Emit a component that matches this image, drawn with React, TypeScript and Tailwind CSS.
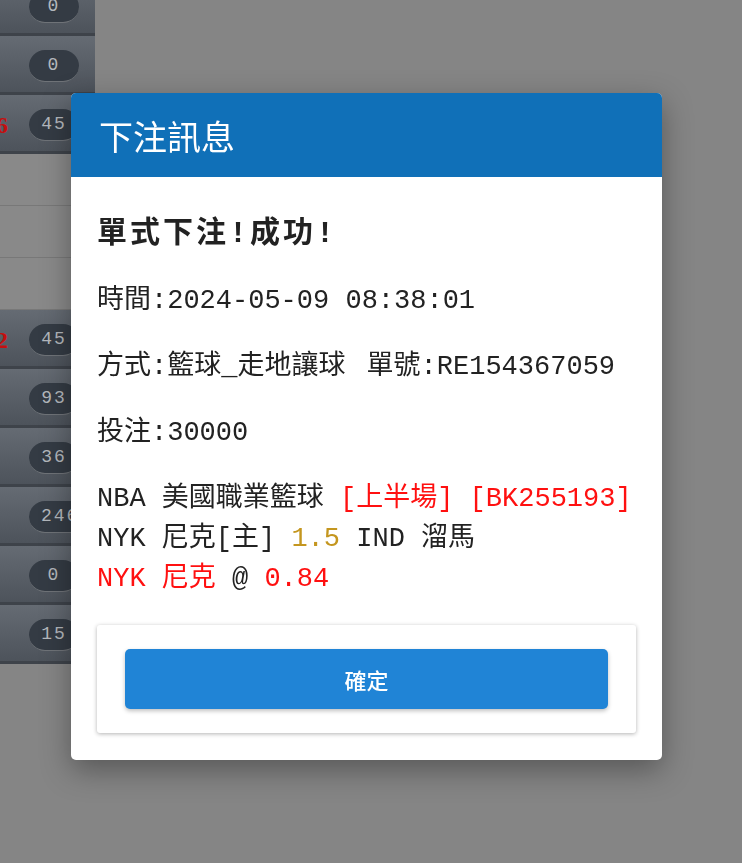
type Row = {
  kind: "dark" | "light";
  count?: string;
  mark?: string;
};

const rows: Row[] = [
  { kind: "dark", count: "0" },
  { kind: "dark", count: "0" },
  { kind: "dark", count: "45", mark: "6" },
  { kind: "light" },
  { kind: "light" },
  { kind: "light" },
  { kind: "dark", count: "45", mark: "2" },
  { kind: "dark", count: "93" },
  { kind: "dark", count: "36" },
  { kind: "dark", count: "246" },
  { kind: "dark", count: "0" },
  { kind: "dark", count: "15" },
];

const mono = "font-['Liberation_Mono','Noto_Sans_CJK_TC',monospace]";
const sans = "font-['Noto_Sans_CJK_TC','Noto_Sans',sans-serif]";

function ListRow({ row }: { row: Row }) {
  if (row.kind === "light") {
    return <div className="h-[52px] border-b border-[#787878] bg-[#898989]" />;
  }
  return (
    <div className="flex h-[59px] items-center border-b-[3px] border-[#3e434a] bg-gradient-to-b from-[#656b73] to-[#4d535b] pt-[3px]">
      <div className="w-[29px] overflow-hidden">
        <span className="-ml-[4px] block font-['Liberation_Serif',serif] text-[24px] font-bold text-[#c40f0f]">
          {row.mark}
        </span>
      </div>
      <div className="flex h-[32px] min-w-[50px] items-center justify-center rounded-full border-b border-[#6f7378] bg-[#343b44] px-[12px]">
        <span className={`${mono} text-[18px] tracking-[2px] text-[#b3b7bc]`}>{row.count}</span>
      </div>
    </div>
  );
}

export default function App() {
  return (
    <div className="relative min-h-screen overflow-hidden bg-[#858585]">
      <div className="-mt-[23px] w-[95px]">
        {rows.map((row, i) => (
          <ListRow key={i} row={row} />
        ))}
      </div>

      <div className="fixed inset-0 pl-[71px] pt-[93px]">
        <div className="w-[591px] overflow-hidden rounded-[5px] bg-white shadow-[0_10px_30px_rgba(0,0,0,0.35)]">
          <div className="flex h-[84px] items-center bg-[#1070b8] px-[28px]">
            <h1 className={`${sans} text-[34px] font-normal text-white`}>下注訊息</h1>
          </div>

          <div className={`${mono} px-[26px] pb-[27px] pt-[37px] text-[#222]`}>
            <div className="mb-[27px] text-[30px] font-bold leading-[40px] tracking-[3px]">單式下注!成功!</div>
            <div className="flex flex-col gap-[26px] text-[27px] leading-[40px]">
              <div>時間:2024-05-09 08:38:01</div>
              <div>
                方式:籃球_走地讓球 <span className="pl-[5px]">單號:RE154367059</span>
              </div>
              <div>投注:30000</div>
              <div className="whitespace-nowrap">
                <div>
                  NBA 美國職業籃球 <span className="text-[#ff1010]">[上半場] [BK255193]</span>
                </div>
                <div>
                  NYK 尼克[主] <span className="text-[#c4961f]">1.5</span> IND 溜馬
                </div>
                <div>
                  <span className="text-[#ff1010]">NYK 尼克</span> @{" "}
                  <span className="text-[#ff1010]">0.84</span>
                </div>
              </div>
            </div>

            <div className="mt-[26px] rounded-[3px] bg-white px-[28px] py-[24px] shadow-[0_1px_4px_rgba(0,0,0,0.3)]">
              <button
                className={`${sans} flex h-[60px] w-full items-center justify-center rounded-[5px] bg-[#2084d6] text-[22px] font-medium text-white shadow-[0_2px_4px_rgba(0,0,0,0.25)]`}
              >
                確定
              </button>
            </div>
          </div>
        </div>
      </div>
    </div>
  );
}
